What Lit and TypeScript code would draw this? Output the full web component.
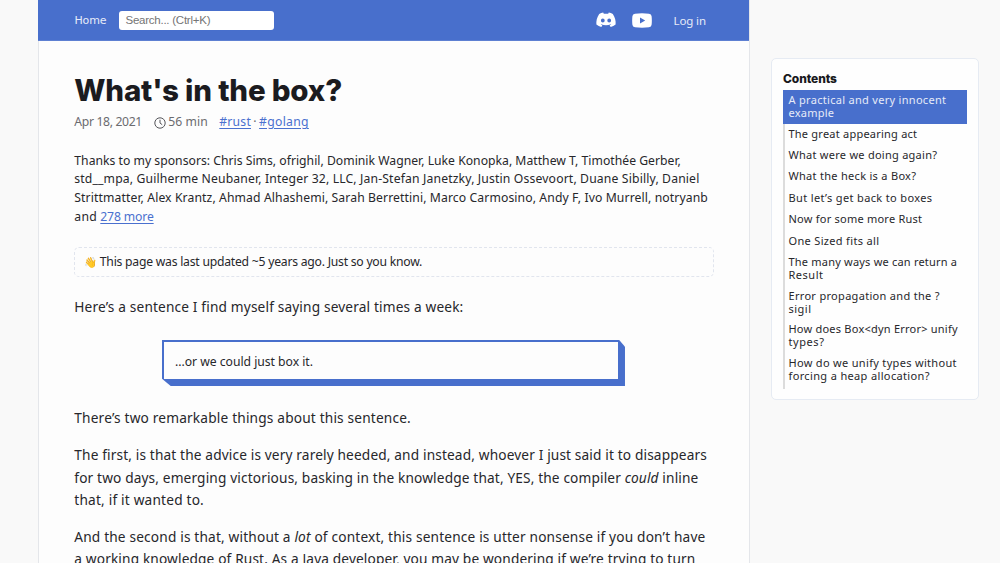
import { LitElement, html, css } from "lit";
import { customElement, property } from "lit/decorators.js";

/** One line of text, tracked so that it spans a given measure. */
@customElement("text-line")
class TextLine extends LitElement {
  @property({ type: Number }) measure = 0;

  static styles = css`
    :host { display: inline-block; white-space: nowrap; vertical-align: baseline; }
    .run { display: inline-block; }
    :host(.link) .run { text-decoration: underline; text-decoration-thickness: 1px; text-underline-offset: 1.5px; }
  `;

  async firstUpdated() {
    this.fit();
    await document.fonts.ready;
    this.fit();
  }

  fit() {
    const run = this.renderRoot.querySelector(".run") as HTMLElement;
    this.style.letterSpacing = "0px";
    const n = (this.textContent || "").trim().length;
    const natural = run.getBoundingClientRect().width;
    if (this.measure && n > 1) {
      this.style.letterSpacing = `${(this.measure - natural) / (n - 1)}px`;
      this.style.width = `${this.measure}px`;
    }
  }

  render() {
    return html`<span class="run"><slot></slot></span>`;
  }
}

type Line = [string, number];

const SPONSORS: Line[] = [
  ["Thanks to my sponsors: Chris Sims, ofrighil, Dominik Wagner, Luke Konopka, Matthew T, Timothée Gerber,", 606.5],
  ["std__mpa, Guilherme Neubaner, Integer 32, LLC, Jan-Stefan Janetzky, Justin Ossevoort, Duane Sibilly, Daniel", 625],
  ["Strittmatter, Alex Krantz, Ahmad Alhashemi, Sarah Berrettini, Marco Carmosino, Andy F, Ivo Murrell, notryanb", 633.5],
];

const CONTENTS: Line[][] = [
  [["A practical and very innocent", 157.5], ["example", 45.5]],
  [["The great appearing act", 128.5]],
  [["What were we doing again?", 148.5]],
  [["What the heck is a Box?", 127.5]],
  [["But let’s get back to boxes", 143.5]],
  [["Now for some more Rust", 133.5]],
  [["One Sized fits all", 90.5]],
  [["The many ways we can return a", 168.5], ["Result", 34.5]],
  [["Error propagation and the ?", 151], ["sigil", 22.5]],
  [["How does Box<dyn Error> unify", 169], ["types?", 35.5]],
  [["How do we unify types without", 168], ["forcing a heap allocation?", 141]],
];

const line = ([text, measure]: Line) =>
  html`<text-line .measure=${measure}>${text}</text-line>`;

const link = ([text, measure]: Line) =>
  html`<text-line class="link" .measure=${measure}>${text}</text-line>`;

@customElement("app-root")
class AppRoot extends LitElement {
  static styles = css`
    :host {
      display: block;
      height: 563px;
      overflow: hidden;
      background: #f9f9f9;
      color: #27272b;
      font-family: "Noto Sans", sans-serif;
    }
    * { box-sizing: border-box; }
    .page { display: flex; align-items: flex-start; gap: 21px; padding-left: 38px; }
    .main { width: 712px; height: 563px; background: #fdfdfd; border: solid #e4e6ea; border-width: 0 1px; }
    .bar { height: 41px; margin-left: -1px; padding: 0 43px 0 36.5px; display: flex; align-items: center; background: #486fcc; border-bottom: 1px solid #5e80d2; color: #e6ebf8; }
    .nav { font-size: 11.5px; }
    .home { font-size: 11px; font-family: "DejaVu Sans", sans-serif; }
    .search { width: 155px; height: 19px; margin-left: 12.5px; padding: 0 6.5px; border-radius: 3px; background: #fff; color: #757575; font: 11.5px/19px "Liberation Sans", sans-serif; }
    .grow { flex: 1; }
    .bar svg { display: block; }
    .discord { margin-right: 16px; }
    .youtube { margin-right: 22px; }
    .article { padding: 32px 35.5px 0 35.3px; }
    .title { margin: 0; height: 35px; font: 800 29.5px/35px Inter, sans-serif; color: #1b1b1f; white-space: nowrap; }
    .meta { display: flex; align-items: center; height: 20px; margin-top: 4px; font-size: 12.2px; line-height: 20px; color: #6b6b6f; }
    .clock { margin: 2px 2.5px 0 11.5px; }
    .tags { margin-left: 11.5px; display: flex; gap: 2.5px; }
    .link { color: #4a70cf; }
    .sponsors { margin-top: 19.8px; font-size: 12.2px; line-height: 18.6px; display: flex; flex-direction: column; }
    .rest { display: flex; gap: 3.5px; padding-top: 0.5px; }
    .notice { margin-top: 20.5px; height: 30px; padding: 0 0 0.5px 9px; display: flex; align-items: center; gap: 3px; border: 1px dashed #e1e5ee; border-radius: 5px; font-size: 12.2px; }
    .hand { font-size: 10.5px; width: 12.5px; }
    .para { margin: 0; font-size: 13.7px; line-height: 22.4px; display: flex; flex-direction: column; }
    .lead { margin-top: 19.2px; }
    .box { margin: 21px 0 21px 87.7px; width: 463px; height: 46.5px; padding: 2px 7px 7.5px 2px; background: #486fcc; clip-path: polygon(0 0, 457px 0, 463px 7px, 463px 100%, 9px 100%, 0 39px); }
    .face { height: 37px; background: #fdfdfd; padding-left: 11px; font-size: 12.2px; line-height: 40px; }
    .gap { margin-top: 14.6px; }
    em { font-style: italic; }
    .toc { width: 208px; height: 342px; margin-top: 58px; padding: 13px 11px 0; background: #fefefe; border: 1px solid #e6ebf3; border-radius: 5px; }
    .heading { font: 800 12px/14px Inter, sans-serif; color: #19191c; height: 18px; }
    .items { border-left: 2px solid #dcdcdc; height: 299px; }
    .item { padding: 3px 0 4px 3.5px; display: flex; flex-direction: column; font-size: 11px; line-height: 13.2px; height: 21.35px; }
    .two { height: 33.8px; }
    .item.two { line-height: 13px; }
    .on { background: #486fcc; color: #e6ebf8; margin-left: -2px; padding-left: 5.5px; }
  `;

  render() {
    return html`
      <div class="page">
        <main class="main">
          <header class="bar">
            <span class="nav home">${line(["Home", 32])}</span>
            <div class="search">${line(["Search... (Ctrl+K)", 85])}</div>
            <span class="grow"></span>
            <svg class="discord" width="20" height="16" viewBox="0 0 20 16">
              <path fill="#fff" fill-rule="evenodd" d="M16.800 1.900A16 16 0 0 0 12.800.6l-.6 1.200a15 15 0 0 0-4.400 0L7.200.6a16 16 0 0 0-4 1.300C.8 5.500.1 9 .4 12.500a16 16 0 0 0 4.900 2.600l1.100-1.800-1.700-.8.4-.3a11.500 11.500 0 0 0 9.800 0l.4.3-1.700.8 1.100 1.800a16 16 0 0 0 4.900-2.600c.4-4-.7-7.500-2.800-10.600ZM6.800 10.400a1.900 2 0 1 1 0-4 1.900 2 0 0 1 0 4Zm6.400 0a1.900 2 0 1 1 0-4 1.900 2 0 0 1 0 4Z"/>
            </svg>
            <svg class="youtube" width="20" height="15" viewBox="0 0 20 15">
              <path fill="#fff" fill-rule="evenodd" d="M3 .7Q10-.1 17 .7 19.400.9 19.600 3.300 20.100 7.500 19.600 11.700 19.400 14.100 17 14.300 10 15.100 3 14.300.6 14.100.4 11.700-.1 7.500.4 3.300.6.9 3 .7ZM8 4.500v6l5.200-3Z"/>
            </svg>
            <span class="nav">${line(["Log in", 32.5])}</span>
          </header>
          <article class="article">
            <h1 class="title">${line(["What's in the box?", 268])}</h1>
            <div class="meta">
              ${line(["Apr 18, 2021", 68])}
              <svg class="clock" width="12" height="12" viewBox="0 0 12 12" fill="none" stroke="#55555a" stroke-width="1">
                <circle cx="6" cy="6" r="5.200"/><path d="M6 2.700V6l2.200 1.700"/>
              </svg>
              ${line(["56 min", 39.5])}
              <span class="tags">${link(["#rust", 31.5])}<span>·</span>${link(["#golang", 49.5])}</span>
            </div>
            <div class="sponsors">
              ${SPONSORS.map(line)}
              <div class="rest">${line(["and", 22.5])}${link(["278 more", 53.5])}</div>
            </div>
            <div class="notice"><span class="hand">👋</span>${line(["This page was last updated ~5 years ago. Just so you know.", 322.5])}</div>
            <p class="para lead">${line(["Here’s a sentence I find myself saying several times a week:", 389])}</p>
            <div class="box"><div class="face">${line(["...or we could just box it.", 138])}</div></div>
            <p class="para">${line(["There’s two remarkable things about this sentence.", 336.5])}</p>
            <p class="para gap">
              ${line(["The first, is that the advice is very rarely heeded, and instead, whoever I just said it to disappears", 632.5])}
              <text-line .measure=${624}>for two days, emerging victorious, basking in the knowledge that, YES, the compiler <em>could</em> inline</text-line>
              ${line(["that, if it wanted to.", 129.5])}
            </p>
            <p class="para gap">
              <text-line .measure=${631}>And the second is that, without a <em>lot</em> of context, this sentence is utter nonsense if you don’t have</text-line>
              ${line(["a working knowledge of Rust. As a Java developer, you may be wondering if we’re trying to turn", 621])}
            </p>
          </article>
        </main>
        <aside class="toc">
          <div class="heading">${line(["Contents", 54])}</div>
          <div class="items">
            ${CONTENTS.map((lines, i) => html`<div class="item ${lines.length > 1 ? "two" : ""} ${i === 0 ? "on" : ""}">${lines.map(line)}</div>`)}
          </div>
        </aside>
      </div>
    `;
  }
}
